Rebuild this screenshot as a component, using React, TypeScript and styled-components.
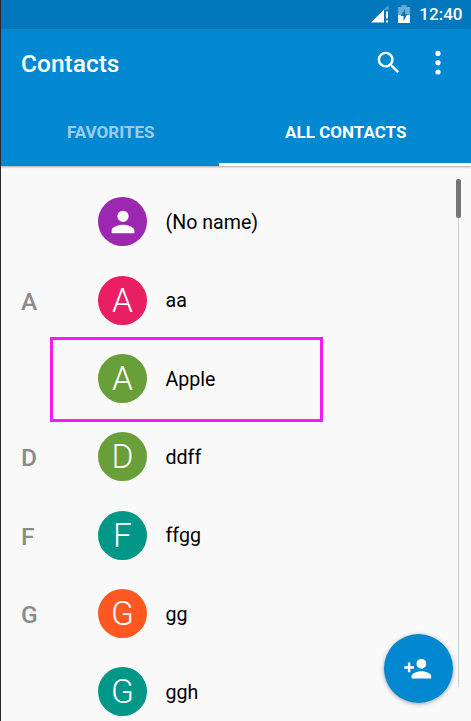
import React from "react";
import styled, { createGlobalStyle } from "styled-components";

const GlobalStyle = createGlobalStyle`
  * { box-sizing: border-box; }
  html, body { margin: 0; padding: 0; }
  body { font-family: Roboto, "Liberation Sans", sans-serif; overflow: hidden; }
`;

const Screen = styled.div`
  position: relative;
  display: flex;
  flex-direction: column;
  width: 471px;
  height: 721px;
  overflow: hidden;
  background: #f9f9f9;
  border-left: 1px solid #2a2a2c;
`;

const StatusBar = styled.div`
  display: flex;
  align-items: center;
  justify-content: flex-end;
  flex: none;
  height: 29px;
  padding-right: 8.5px;
  background: #0277bd;
`;

const SignalIcon = styled.svg`
  width: 18px;
  height: 18px;
  margin: 0 9px 2px 0;
`;

const BatteryIcon = styled.svg`
  width: 12px;
  height: 18px;
  margin: 0 9px 2px 0;
`;

const Clock = styled.span`
  color: #fff;
  font-size: 17px;
  font-weight: 500;
  line-height: 29px;
`;

const Header = styled.header`
  flex: none;
  display: flex;
  flex-direction: column;
  height: 137px;
  background: #0288d1;
  box-shadow: 0 1px 2px rgba(0, 0, 0, 0.35);
`;

const Toolbar = styled.div`
  display: flex;
  align-items: center;
  height: 69px;
  padding: 0 30.5px 1px 20px;
`;

const Title = styled.h1`
  flex: 1;
  margin: 1px 0 0;
  color: #fff;
  font-size: 24.5px;
  font-weight: 500;
  line-height: 30px;
`;

const SearchIcon = styled.svg`
  width: 29.4px;
  height: 29.4px;
  margin-right: 31px;
`;

const MoreIcon = styled.svg`
  width: 6px;
  height: 26px;
`;

const Tabs = styled.div`
  flex: 1;
  display: grid;
  grid-template-columns: 218px 1fr;
`;

const Tab = styled.div<{ $active?: boolean }>`
  padding: 24px 0 0 1.5px;
  color: ${(p) => (p.$active ? "#fff" : "rgba(255, 255, 255, 0.62)")};
  border-bottom: 3px solid ${(p) => (p.$active ? "#fff" : "transparent")};
  font-size: 17px;
  font-weight: 700;
  line-height: 20px;
  text-align: center;
`;

const List = styled.main`
  flex: 1;
  min-height: 0;
  padding-top: 16.7px;
  overflow: hidden;
`;

const Row = styled.div`
  display: grid;
  grid-template-columns: 77px 49px 1fr;
  align-items: center;
  height: 78.35px;
  padding-left: 20px;
`;

const Section = styled.span`
  color: #8b8b8b;
  font-size: 24.5px;
  font-weight: 500;
  line-height: 30px;
  padding-top: 3px;
`;

const Avatar = styled.div<{ $color: string }>`
  display: flex;
  align-items: center;
  justify-content: center;
  width: 49px;
  height: 49px;
  border-radius: 50%;
  background: ${(p) => p.$color};
  color: #fff;
  font-size: 33.5px;
  font-weight: 300;
  line-height: 49px;
`;

const PersonIcon = styled.svg`
  width: 34px;
  height: 34px;
`;

const Name = styled.span`
  padding: 2px 0 0 18.5px;
  color: #000;
  font-size: 19.6px;
  line-height: 26px;
`;

const Highlight = styled.div`
  position: absolute;
  left: 49px;
  top: 337px;
  width: 273px;
  height: 85px;
  border: 3px solid #f51bf5;
`;

const ScrollTrack = styled.div`
  position: absolute;
  left: 455px;
  top: 179px;
  width: 5px;
  height: 508px;
  background: linear-gradient(#cfcfcf, #cfcfcf) 2px 0 / 1px 100% no-repeat;
`;

const ScrollThumb = styled.div`
  width: 5px;
  height: 39px;
  border-radius: 2px;
  background: #757575;
`;

const Fab = styled.button`
  position: absolute;
  left: 382.7px;
  top: 634px;
  display: flex;
  align-items: center;
  justify-content: center;
  width: 69px;
  height: 69px;
  padding: 0;
  border: 0;
  border-radius: 50%;
  background: #0288d1;
  box-shadow: 0 1px 4px rgba(0, 0, 0, 0.35);
`;

const AddIcon = styled.svg`
  width: 29.4px;
  height: 29.4px;
`;

interface Contact {
  section?: string;
  initial?: string;
  color: string;
  name: string;
}

const contacts: Contact[] = [
  { color: "#9c27b0", name: "(No name)" },
  { section: "A", initial: "A", color: "#e91e63", name: "aa" },
  { initial: "A", color: "#689f38", name: "Apple" },
  { section: "D", initial: "D", color: "#689f38", name: "ddff" },
  { section: "F", initial: "F", color: "#009688", name: "ffgg" },
  { section: "G", initial: "G", color: "#ff5722", name: "gg" },
  { initial: "G", color: "#009688", name: "ggh" },
];

export default function App() {
  return (
    <>
      <GlobalStyle />
      <Screen>
        <StatusBar>
          <SignalIcon viewBox="0 0 18 18" fill="#fff">
            <path d="M0 17.5 13 4.5V17.5Z" />
            <path d="M13 4.5 17.5 0V5H13Z" opacity=".3" />
            <path d="M15 6.5h2v7h-2zM15 15.5h2v2h-2z" />
          </SignalIcon>
          <BatteryIcon viewBox="0 0 12 18" fill="#fff">
            <path d="M3.5 0h5v2H12v8H0V2h3.5z" opacity=".4" />
            <path d="M0 10h12v8H0z" />
            <path d="M7 4 2.5 11H5.5V16L9.5 9H7Z" fill="#0277bd" />
          </BatteryIcon>
          <Clock>12:40</Clock>
        </StatusBar>
        <Header>
          <Toolbar>
            <Title>Contacts</Title>
            <SearchIcon viewBox="0 0 24 24" fill="#fff">
              <path d="M15.5 14h-.79l-.28-.27A6.47 6.47 0 0 0 16 9.5 6.5 6.5 0 1 0 9.5 16c1.61 0 3.09-.59 4.23-1.57l.27.28v.79l5 4.99L20.49 19l-4.99-5zm-6 0a4.5 4.5 0 1 1 0-9 4.5 4.5 0 0 1 0 9z" />
            </SearchIcon>
            <MoreIcon viewBox="0 0 6 26" fill="#fff">
              <circle cx="3" cy="3.4" r="2.6" />
              <circle cx="3" cy="12.7" r="2.6" />
              <circle cx="3" cy="22" r="2.6" />
            </MoreIcon>
          </Toolbar>
          <Tabs>
            <Tab>FAVORITES</Tab>
            <Tab $active>ALL CONTACTS</Tab>
          </Tabs>
        </Header>
        <List>
          {contacts.map((c) => (
            <Row key={c.name}>
              <Section>{c.section}</Section>
              <Avatar $color={c.color}>
                {c.initial ?? (
                  <PersonIcon viewBox="0 0 24 24" fill="#fff">
                    <path d="M12 12a4 4 0 1 0 0-8 4 4 0 0 0 0 8zm0 2c-2.67 0-8 1.34-8 4v2h16v-2c0-2.66-5.33-4-8-4z" />
                  </PersonIcon>
                )}
              </Avatar>
              <Name>{c.name}</Name>
            </Row>
          ))}
        </List>
        <Highlight />
        <ScrollTrack>
          <ScrollThumb />
        </ScrollTrack>
        <Fab aria-label="Add contact">
          <AddIcon viewBox="0 0 24 24" fill="#fff">
            <path d="M15 12a4 4 0 1 0 0-8 4 4 0 0 0 0 8zm-9-2V7H4v3H1v2h3v3h2v-3h3v-2H6zm9 4c-2.67 0-8 1.34-8 4v2h16v-2c0-2.66-5.33-4-8-4z" />
          </AddIcon>
        </Fab>
      </Screen>
    </>
  );
}
